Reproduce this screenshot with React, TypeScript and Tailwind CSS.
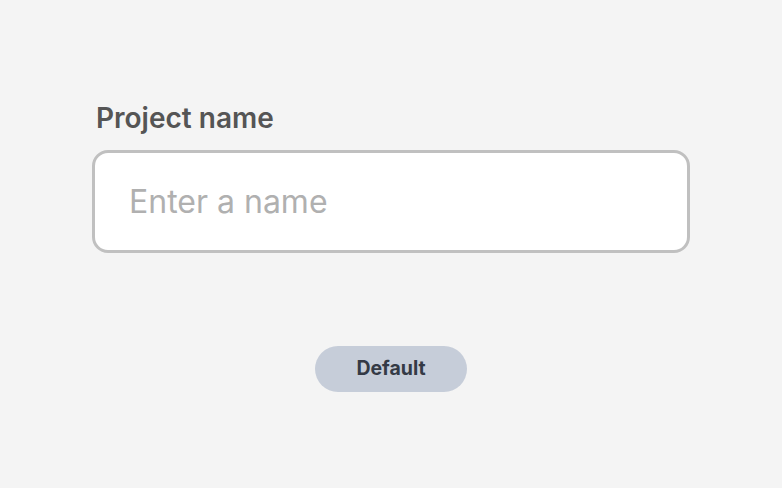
export default function App() {
  return (
    <div className="min-h-screen w-full bg-[#f4f4f4] font-['Inter',sans-serif]">
      <div className="ml-[92px] flex w-[598px] flex-col pt-[101px]">
        <label className="pl-[4px] text-[28px] font-semibold leading-[34px] text-[#555555]">Project name</label>
        <input
          placeholder="Enter a name"
          className="mt-[15px] h-[103px] w-full rounded-[16px] border-[3px] border-[#c0c0c0] bg-white px-[34px] text-[32px] text-[#333333] placeholder:text-[#b0b0b0] outline-none"
        />
        <div className="mt-[93px] flex justify-center">
          <button className="h-[46px] w-[152px] rounded-full bg-[#c6cdd9] text-[19.5px] font-bold text-[#343a46]">
            Default
          </button>
        </div>
      </div>
    </div>
  );
}
